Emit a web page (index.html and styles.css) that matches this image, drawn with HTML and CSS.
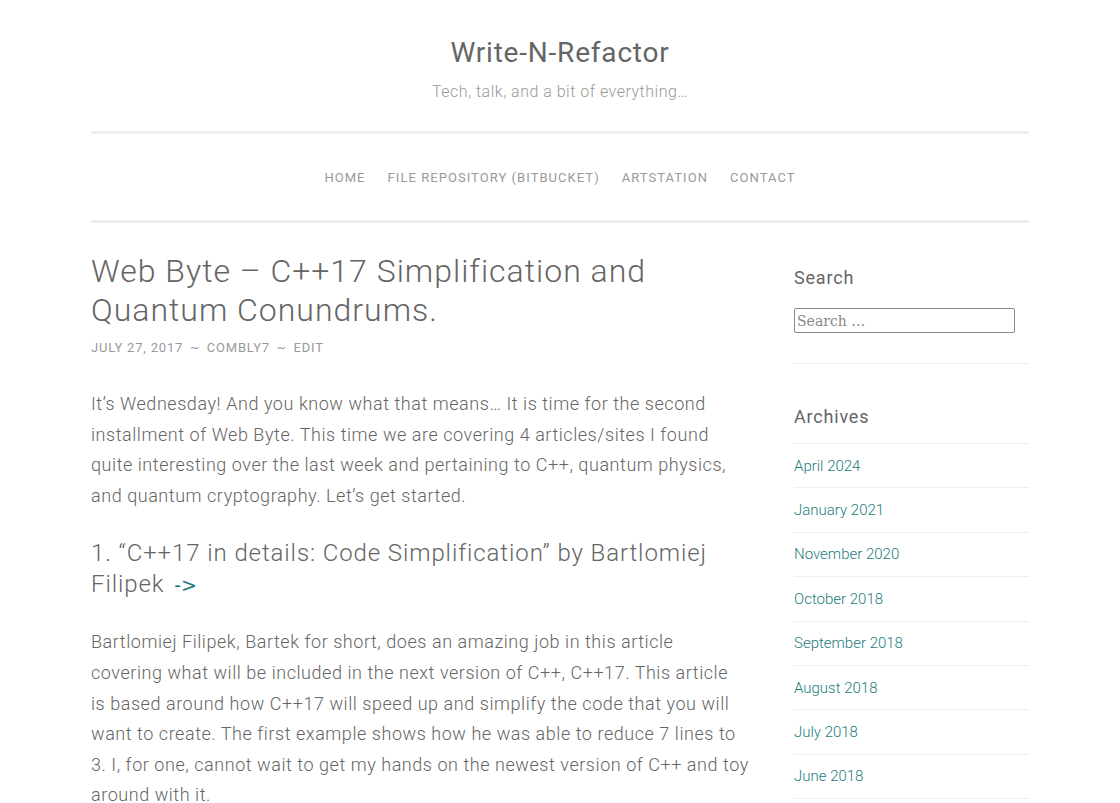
FILE: index.html
```html
<!DOCTYPE html>
<html lang="en">
<head>
<meta charset="utf-8">
<title>Write-N-Refactor</title>
<link rel="stylesheet" href="styles.css">
</head>
<body>
<div class="page">
  <header class="site-header">
    <h1 class="site-title">Write-N-Refactor</h1>
    <p class="site-tagline">Tech, talk, and a bit of everything…</p>
  </header>
  <nav class="main-nav">
    <a href="#">Home</a>
    <a href="#">File Repository (BitBucket)</a>
    <a href="#">ArtStation</a>
    <a href="#">Contact</a>
  </nav>
  <div class="content">
    <main class="post">
      <h1 class="post-title">Web Byte – C++17 Simplification and Quantum Conundrums.</h1>
      <div class="post-meta"><span>July 27, 2017</span><span class="sep">~</span><span>comblY7</span><span class="sep">~</span><span>Edit</span></div>
      <p>It’s Wednesday! And you know what that means… It is time for the second installment of Web Byte. This time we are covering 4 articles/sites I found quite interesting over the last week and pertaining to C++, quantum physics, and quantum cryptography. Let’s get started.</p>
      <h2 class="post-sub">1. “C++17 in details: Code Simplification” by Bartlomiej Filipek <a class="arrow" href="#">-&gt;</a></h2>
      <p>Bartlomiej Filipek, Bartek for short, does an amazing job in this article covering&nbsp;what will be included in the next version of C++, C++17. This article is&nbsp;based around how C++17 will speed up and simplify the code that you will want to create. The first example shows how he was able to reduce 7 lines to 3. I, for one, cannot wait to get my hands on the newest version of C++ and toy around with it.</p>
    </main>
    <aside class="sidebar">
      <section class="widget widget-search">
        <h2 class="widget-title">Search</h2>
        <input class="search-field" type="search" placeholder="Search …">
      </section>
      <section class="widget widget-archives">
        <h2 class="widget-title">Archives</h2>
        <ul class="archive-list">
          <li><a href="#">April 2024</a></li>
          <li><a href="#">January 2021</a></li>
          <li><a href="#">November 2020</a></li>
          <li><a href="#">October 2018</a></li>
          <li><a href="#">September 2018</a></li>
          <li><a href="#">August 2018</a></li>
          <li><a href="#">July 2018</a></li>
          <li><a href="#">June 2018</a></li>
        </ul>
      </section>
    </aside>
  </div>
</div>
</body>
</html>
```
FILE: styles.css
```css
html, body {
  margin: 0;
  padding: 0;
  background: #fff;
}
body {
  font-family: "Roboto Slab", Roboto, "Noto Sans", sans-serif;
  color: #656565;
  font-weight: 300;
}
a {
  text-decoration: none;
  color: #1c7c7c;
}
.page {
  width: 938px;
  margin: 0 auto;
}
.site-header {
  padding-top: 35px;
  padding-bottom: 27px;
  text-align: center;
  border-bottom: 3px solid #eee;
}
.site-title {
  margin: 0;
  font-size: 28px;
  line-height: 36px;
  font-weight: 400;
  color: #656565;
  letter-spacing: 0.8px;
}
.site-tagline {
  margin: 9px 0 0;
  font-size: 16px;
  line-height: 24px;
  font-weight: 300;
  color: #999;
  letter-spacing: 0.5px;
}
.main-nav {
  height: 85px;
  padding-top: 1px;
  display: flex;
  justify-content: center;
  align-items: center;
  gap: 22px;
  border-bottom: 3px solid #eee;
}
.main-nav a {
  font-size: 13px;
  line-height: 20px;
  text-transform: uppercase;
  letter-spacing: 1.05px;
  color: #999;
  font-weight: 400;
}
.content {
  display: flex;
  justify-content: space-between;
  padding-top: 29px;
}
.post {
  width: 660px;
}
.post-title {
  margin: 0;
  font-size: 32px;
  line-height: 39px;
  font-weight: 300;
  color: #656565;
  letter-spacing: 1px;
}
.post-meta {
  margin-top: 8px;
  font-size: 13px;
  line-height: 20px;
  text-transform: uppercase;
  letter-spacing: 0.8px;
  color: #999;
  font-weight: 400;
}
.post-meta .sep {
  margin: 0 7px;
}
.post p {
  margin: 31px 0 0;
  font-size: 18px;
  line-height: 30.6px;
  font-weight: 300;
  letter-spacing: 0.55px;
}
.post-sub {
  margin: 27px 0 0;
  font-size: 24px;
  line-height: 31px;
  font-weight: 300;
  color: #656565;
  letter-spacing: 0.9px;
}
.post-sub + p {
  margin-top: 27px;
}
.arrow {
  margin-left: 3px;
  font-family: "DejaVu Sans", sans-serif;
  font-size: 19px;
  line-height: 24px;
  font-weight: 400;
  letter-spacing: 0;
  white-space: nowrap;
  color: #1c7c7c;
}
.sidebar {
  width: 235px;
  padding-top: 13px;
}
.widget-title {
  margin: 0;
  font-size: 18px;
  line-height: 26px;
  font-weight: 400;
  color: #656565;
  letter-spacing: 0.8px;
}
.widget-search {
  padding-bottom: 30px;
  border-bottom: 1px solid #eee;
}
.search-field {
  display: block;
  box-sizing: border-box;
  margin-top: 17px;
  width: 221px;
  height: 25px;
  padding: 1px 2px;
  border: 1px solid #8a8a8a;
  border-radius: 2px;
  font-family: "DejaVu Serif", serif;
  font-size: 14px;
  color: #656565;
}
.search-field::placeholder {
  color: #888;
}
.widget-archives {
  padding-top: 40px;
}
.archive-list {
  list-style: none;
  margin: 13px 0 0;
  padding: 0;
  border-top: 1px solid #eee;
}
.archive-list li {
  border-bottom: 1px solid #eee;
  height: 43.4px;
  display: flex;
  align-items: center;
}
.archive-list a {
  font-size: 15px;
  line-height: 20px;
  font-weight: 300;
  color: #1c7c7c;
}
```
